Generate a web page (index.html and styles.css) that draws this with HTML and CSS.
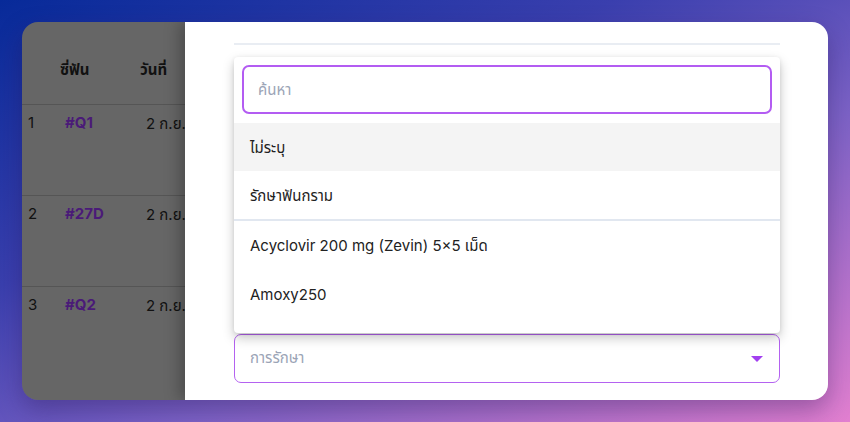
FILE: index.html
```html
<!DOCTYPE html>
<html lang="th">
<head>
<meta charset="utf-8">
<link rel="stylesheet" href="styles.css">
</head>
<body>
<div class="card">
  <div class="table-side">
    <table class="teeth">
      <thead>
        <tr><th class="c-no"></th><th class="c-tooth">ซี่ฟัน</th><th class="c-date">วันที่</th></tr>
      </thead>
      <tbody>
        <tr><td class="c-no">1</td><td class="c-tooth"><span class="tag">#Q1</span></td><td class="c-date">2 ก.ย.</td></tr>
        <tr><td class="c-no">2</td><td class="c-tooth"><span class="tag">#27D</span></td><td class="c-date">2 ก.ย.</td></tr>
        <tr class="last"><td class="c-no">3</td><td class="c-tooth"><span class="tag">#Q2</span></td><td class="c-date">2 ก.ย.</td></tr>
      </tbody>
    </table>
  </div>
  <div class="drawer">
    <div class="divider"></div>
    <div class="menu">
      <div class="search"><span class="placeholder">ค้นหา</span></div>
      <ul class="options">
        <li class="option active">ไม่ระบุ</li>
        <li class="option group-end">รักษาฟันกราม</li>
        <li class="option">Acyclovir 200 mg (Zevin) 5×5 เม็ด</li>
        <li class="option">Amoxy250</li>
      </ul>
    </div>
    <div class="select">
      <span class="placeholder">การรักษา</span>
      <span class="caret"></span>
    </div>
  </div>
</div>
</body>
</html>
```

FILE: styles.css
```css
* { box-sizing: border-box; }
html, body { margin: 0; height: 100%; }
body {
  width: 850px;
  height: 422px;
  padding: 22px;
  overflow: hidden;
  font-family: Inter, "Noto Sans", "Noto Sans Thai", sans-serif;
  background: linear-gradient(155deg, #072a99 0%, #3a3fae 35%, #7c62c6 62%, #e27fd0 100%);
}
.card {
  display: flex;
  height: 378px;
  border-radius: 16px;
  overflow: hidden;
  box-shadow: 0 10px 24px rgba(40, 20, 80, 0.35);
}
.table-side {
  width: 163px;
  flex: none;
  background: #666666;
  overflow: hidden;
}
.teeth {
  border-collapse: collapse;
  width: 210px;
  font-size: 15px;
  color: #111111;
}
.teeth th {
  height: 82px;
  padding: 16px 0 0;
  text-align: left;
  font-weight: 700;
  vertical-align: middle;
  border-bottom: 1px solid #555;
}
.teeth td {
  height: 91px;
  vertical-align: top;
  padding-top: 8px;
  border-bottom: 1px solid #555;
}
.teeth tr.last td { border-bottom: none; }
.c-no { width: 32px; }
.teeth td.c-no, .teeth th.c-no { padding-left: 6px; }
.c-tooth { width: 80px; }
.teeth th.c-tooth { padding-left: 6px; }
.teeth td.c-tooth { padding-left: 11px; }
.teeth th.c-date { padding-left: 6px; }
.teeth td.c-date { padding-left: 12px; }
.tag { color: #4a1a78; font-weight: 700; }
.drawer {
  flex: 1;
  background: #fff;
  padding: 21px 48px 0 49px;
  display: flex;
  flex-direction: column;
  box-shadow: -6px 0 14px rgba(0, 0, 0, 0.25);
  position: relative;
}
.divider {
  height: 2px;
  background: #e9edf3;
}
.menu {
  margin-top: 12px;
  height: 276px;
  background: #fff;
  border-radius: 4px;
  box-shadow: 0 5px 12px rgba(0, 0, 0, 0.22), 0 1px 4px rgba(0,0,0,0.08);
  padding: 8px 8px 0;
  overflow: hidden;
  position: relative;
  z-index: 2;
}
.search {
  height: 49px;
  border: 2px solid #b35cf2;
  border-radius: 7px;
  display: flex;
  align-items: center;
  padding: 2px 0 0 14px;
}
.placeholder {
  color: #9ba4b6;
  font-size: 15px;
}
.options {
  list-style: none;
  margin: 9px -8px 0;
  padding: 0;
}
.option {
  height: 48px;
  display: flex;
  align-items: center;
  padding: 3px 0 0 16px;
  font-size: 15px;
  color: #222222;
}
.option.active { background: #f4f4f4; }
.option.group-end { border-bottom: 2px solid #e1e7f0; height: 50px; }
.select {
  margin-top: 1px;
  height: 49px;
  border: 1.5px solid #b462f0;
  border-radius: 7px;
  display: flex;
  align-items: center;
  justify-content: space-between;
  padding: 0 16px 0 15px;
}
.caret {
  width: 0;
  height: 0;
  border-left: 6px solid transparent;
  border-right: 6px solid transparent;
  border-top: 6px solid #a23ff0;
}
```
